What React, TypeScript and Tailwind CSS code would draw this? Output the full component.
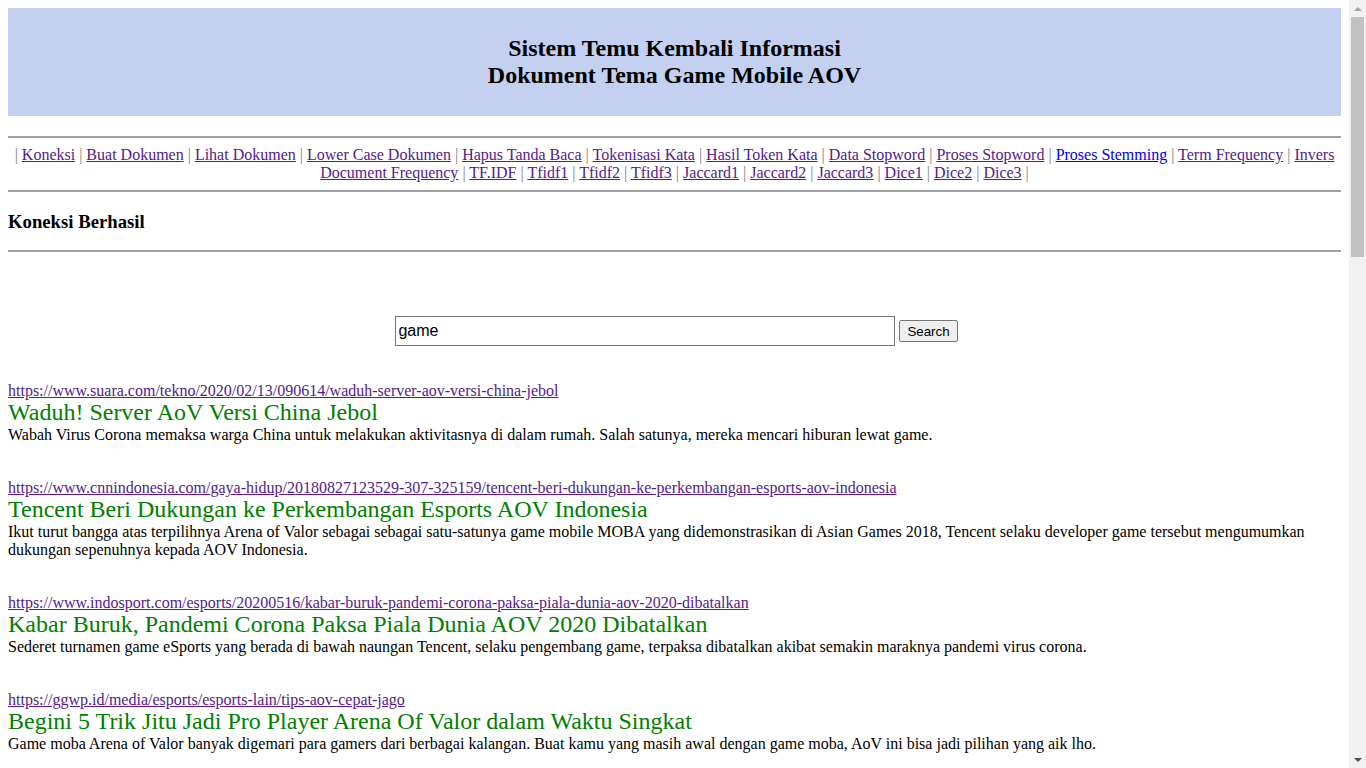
import React from "react";

const navItems: { label: string; fresh?: boolean }[] = [
  { label: "Koneksi" },
  { label: "Buat Dokumen" },
  { label: "Lihat Dokumen" },
  { label: "Lower Case Dokumen" },
  { label: "Hapus Tanda Baca" },
  { label: "Tokenisasi Kata" },
  { label: "Hasil Token Kata" },
  { label: "Data Stopword" },
  { label: "Proses Stopword" },
  { label: "Proses Stemming", fresh: true },
  { label: "Term Frequency" },
  { label: "Invers Document Frequency" },
  { label: "TF.IDF" },
  { label: "Tfidf1" },
  { label: "Tfidf2" },
  { label: "Tfidf3" },
  { label: "Jaccard1" },
  { label: "Jaccard2" },
  { label: "Jaccard3" },
  { label: "Dice1" },
  { label: "Dice2" },
  { label: "Dice3" },
];

const results = [
  {
    url: "https://www.suara.com/tekno/2020/02/13/090614/waduh-server-aov-versi-china-jebol",
    title: "Waduh! Server AoV Versi China Jebol",
    desc: "Wabah Virus Corona memaksa warga China untuk melakukan aktivitasnya di dalam rumah. Salah satunya, mereka mencari hiburan lewat game.",
  },
  {
    url: "https://www.cnnindonesia.com/gaya-hidup/20180827123529-307-325159/tencent-beri-dukungan-ke-perkembangan-esports-aov-indonesia",
    title: "Tencent Beri Dukungan ke Perkembangan Esports AOV Indonesia",
    desc: "Ikut turut bangga atas terpilihnya Arena of Valor sebagai sebagai satu-satunya game mobile MOBA yang didemonstrasikan di Asian Games 2018, Tencent selaku developer game tersebut mengumumkan dukungan sepenuhnya kepada AOV Indonesia.",
  },
  {
    url: "https://www.indosport.com/esports/20200516/kabar-buruk-pandemi-corona-paksa-piala-dunia-aov-2020-dibatalkan",
    title: "Kabar Buruk, Pandemi Corona Paksa Piala Dunia AOV 2020 Dibatalkan",
    desc: "Sederet turnamen game eSports yang berada di bawah naungan Tencent, selaku pengembang game, terpaksa dibatalkan akibat semakin maraknya pandemi virus corona.",
  },
  {
    url: "https://ggwp.id/media/esports/esports-lain/tips-aov-cepat-jago",
    title: "Begini 5 Trik Jitu Jadi Pro Player Arena Of Valor dalam Waktu Singkat",
    desc: "Game moba Arena of Valor banyak digemari para gamers dari berbagai kalangan. Buat kamu yang masih awal dengan game moba, AoV ini bisa jadi pilihan yang aik lho.",
  },
];

const Sep = () => <span className="text-[#808080]"> | </span>;

export default function App() {
  return (
    <div className="flex h-[768px] w-[1366px] overflow-hidden bg-white font-['Liberation_Serif',serif] text-[16px] leading-[18px] text-black">
      <div className="h-[768px] w-[1349px] overflow-hidden">
        <div className="m-2">
          <div className="flex h-[108px] flex-col items-center justify-center bg-[#c3d0ef] text-[24px] font-bold leading-[27px]">
            <div>Sistem Temu Kembali Informasi</div>
            <div>Dokument Tema Game Mobile AOV</div>
          </div>

          <hr className="mt-[20px] border-t-2 border-[#a0a0a0]" />
          <div className="mt-[8px] text-center leading-[18px]">
            <span className="text-[#808080]">| </span>
            {navItems.map((n, i) => (
              <React.Fragment key={n.label}>
                <a
                  href="#"
                  className={`underline ${n.fresh ? "text-[#0000ee]" : "text-[#551a8b]"}`}
                >
                  {n.label}
                </a>
                {i < navItems.length - 1 ? <Sep /> : <span className="text-[#808080]"> |</span>}
              </React.Fragment>
            ))}
          </div>
          <hr className="mt-[8px] border-t-2 border-[#a0a0a0]" />

          <h3 className="mt-[19px] text-[18.72px] font-bold leading-[22px]">Koneksi Berhasil</h3>
          <hr className="mt-[17px] border-t-2 border-[#a0a0a0]" />

          <div className="mt-[64px] flex items-center justify-center gap-[4px] pl-[4px]">
            <input
              type="text"
              defaultValue="game"
              className="h-[30px] w-[500px] border border-[#767676] px-[2px] font-['Liberation_Sans',Arial,sans-serif] text-[16px] text-black outline-none"
            />
            <button className="h-[22px] rounded-[2px] border border-[#767676] bg-[#efefef] px-[7px] font-['Liberation_Sans',Arial,sans-serif] text-[13.33px] leading-[15px] text-black">
              Search
            </button>
          </div>

          <div className="mt-[36px] flex flex-col gap-[35px]">
            {results.map((r) => (
              <div key={r.url} className="flex flex-col">
                <a href="#" className="w-fit text-[#551a8b] underline leading-[17px]">
                  {r.url}
                </a>
                <div className="text-[24px] leading-[27px] text-[#008000]">{r.title}</div>
                <p className="leading-[18px]">{r.desc}</p>
              </div>
            ))}
          </div>
        </div>
      </div>
      <div className="relative flex h-[768px] w-[17px] flex-col items-center bg-[#f1f1f1]">
        <div className="flex h-[17px] w-full items-center justify-center">
          <div className="h-0 w-0 border-x-[4px] border-b-[4px] border-x-transparent border-b-[#a3a3a3]" />
        </div>
        <div className="h-[240px] w-[13px] bg-[#c1c1c1]" />
        <div className="flex-1" />
        <div className="flex h-[17px] w-full items-center justify-center">
          <div className="h-0 w-0 border-x-[4px] border-t-[4px] border-x-transparent border-t-[#505050]" />
        </div>
      </div>
    </div>
  );
}
